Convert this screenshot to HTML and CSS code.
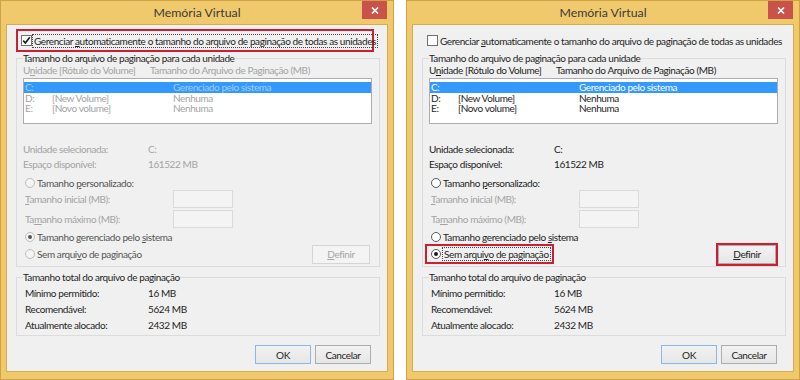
FILE: index.html
```html
<!DOCTYPE html>
<html lang="pt-BR">
<head>
    <meta charset="UTF-8">
    <meta name="viewport" content="width=device-width, initial-scale=1.0">
    <title>Memória Virtual</title>
    <link rel="stylesheet" href="styles.css">
</head>
<body>
<div class="screen">

    <!-- antes: gerenciamento automatico ligado -->
    <section class="dialog is-auto">
        <header class="titlebar">
            <span></span>
            <span class="title">Memória Virtual</span>
            <span class="close-btn">
                <svg width="8" height="7" viewBox="0 0 8 7"><path d="M1 0.5 L7 6.5 M7 0.5 L1 6.5" stroke="#fff" stroke-width="1.6"/></svg>
            </span>
        </header>
        <div class="client">
            <div class="auto-row mark">
                <span class="checkbox checked">
                    <svg width="9" height="9" viewBox="0 0 9 9"><path d="M1.2 4.6 L3.4 7 L7.8 1.2" fill="none" stroke="#1a1a1a" stroke-width="1.6"/></svg>
                </span>
                <span class="focus">Gerenciar <u>a</u>utomaticamente o tamanho do arquivo de paginação de todas as unidades</span>
            </div>

            <fieldset class="group group-drives">
                <legend>Tamanho do arquivo de paginação para cada unidade</legend>
                <div class="cols dim">
                    <span>U<u>n</u>idade [Rótulo do Volume]</span>
                    <span>Tamanho do Arquivo de Paginação (MB)</span>
                </div>
                <div class="listbox dim">
                    <div class="list-row selected"><span>C:</span><span></span><span>Gerenciado pelo sistema</span></div>
                    <div class="list-row"><span>D:</span><span>[New Volume]</span><span>Nenhuma</span></div>
                    <div class="list-row"><span>E:</span><span>[Novo volume]</span><span>Nenhuma</span></div>
                </div>
                <div class="info dim">
                    <span>Unidade selecionada:</span><span>C:</span>
                    <span>Espaço disponível:</span><span>161522 MB</span>
                </div>
                <div class="radio-row custom half">
                    <span class="radio off"></span><span>Tamanho <u>p</u>ersonalizado:</span>
                </div>
                <div class="size-row dim">
                    <span><u>T</u>amanho inicial (MB):</span><span class="textbox"></span>
                </div>
                <div class="size-row second dim">
                    <span>Ta<u>m</u>anho máximo (MB):</span><span class="textbox"></span>
                </div>
                <div class="radio-row system half">
                    <span class="radio off on"></span><span>Tamanho gerenciado pelo <u>s</u>istema</span>
                </div>
                <div class="none-row">
                    <div class="radio-row none-opt half">
                        <span class="radio off"></span><span>Sem arqui<u>v</u>o de paginação</span>
                    </div>
                    <span class="btn-wrap"><span class="btn disabled"><u>D</u>efinir</span></span>
                </div>
            </fieldset>

            <fieldset class="group group-total">
                <legend>Tamanho total do arquivo de paginação</legend>
                <div class="totals">
                    <span>Mínimo permitido:</span><span>16 MB</span>
                    <span>Recomendável:</span><span>5624 MB</span>
                    <span>Atualmente alocado:</span><span>2432 MB</span>
                </div>
            </fieldset>

            <div class="actions">
                <span class="btn default">OK</span>
                <span class="btn">Cancelar</span>
            </div>
        </div>
    </section>

    <!-- depois: sem arquivo de paginacao -->
    <section class="dialog">
        <header class="titlebar">
            <span></span>
            <span class="title">Memória Virtual</span>
            <span class="close-btn">
                <svg width="8" height="7" viewBox="0 0 8 7"><path d="M1 0.5 L7 6.5 M7 0.5 L1 6.5" stroke="#fff" stroke-width="1.6"/></svg>
            </span>
        </header>
        <div class="client">
            <div class="auto-row">
                <span class="checkbox"></span>
                <span class="plain">Gerenciar <u>a</u>utomaticamente o tamanho do arquivo de paginação de todas as unidades</span>
            </div>

            <fieldset class="group group-drives">
                <legend>Tamanho do arquivo de paginação para cada unidade</legend>
                <div class="cols">
                    <span>U<u>n</u>idade [Rótulo do Volume]</span>
                    <span>Tamanho do Arquivo de Paginação (MB)</span>
                </div>
                <div class="listbox">
                    <div class="list-row selected"><span>C:</span><span></span><span>Gerenciado pelo sistema</span></div>
                    <div class="list-row"><span>D:</span><span>[New Volume]</span><span>Nenhuma</span></div>
                    <div class="list-row"><span>E:</span><span>[Novo volume]</span><span>Nenhuma</span></div>
                </div>
                <div class="info">
                    <span>Unidade selecionada:</span><span>C:</span>
                    <span>Espaço disponível:</span><span>161522 MB</span>
                </div>
                <div class="radio-row custom">
                    <span class="radio"></span><span>Tamanho <u>p</u>ersonalizado:</span>
                </div>
                <div class="size-row dim">
                    <span><u>T</u>amanho inicial (MB):</span><span class="textbox"></span>
                </div>
                <div class="size-row second dim">
                    <span>Ta<u>m</u>anho máximo (MB):</span><span class="textbox"></span>
                </div>
                <div class="radio-row system">
                    <span class="radio"></span><span>Tamanho gerenciado pelo <u>s</u>istema</span>
                </div>
                <div class="none-row">
                    <div class="radio-row none-opt mark">
                        <span class="radio on"></span><span class="focus">Sem arqui<u>v</u>o de paginação</span>
                    </div>
                    <span class="btn-wrap mark"><span class="btn"><u>D</u>efinir</span></span>
                </div>
            </fieldset>

            <fieldset class="group group-total">
                <legend>Tamanho total do arquivo de paginação</legend>
                <div class="totals">
                    <span>Mínimo permitido:</span><span>16 MB</span>
                    <span>Recomendável:</span><span>5624 MB</span>
                    <span>Atualmente alocado:</span><span>2432 MB</span>
                </div>
            </fieldset>

            <div class="actions">
                <span class="btn default">OK</span>
                <span class="btn">Cancelar</span>
            </div>
        </div>
    </section>

</div>
</body>
</html>
```
FILE: styles.css
```css
body {
    margin: 0;
    background: #fff;
    font-family: Lato, "Liberation Sans", sans-serif;
    font-size: 10px;
    letter-spacing: -0.4px;
    color: #1e1e1e;
    white-space: nowrap;
}

.screen {
    display: flex;
    gap: 12px;
    width: 800px;
    height: 380px;
}

/* janela */
.dialog {
    box-sizing: border-box;
    width: 394px;
    height: 380px;
    display: flex;
    flex-direction: column;
    padding: 0 5px 7px 5px;
    background: #f1c96d;
    border: 1px solid #cfa343;
}

.titlebar {
    height: 23px;
    display: grid;
    grid-template-columns: 1fr auto 1fr;
    align-items: start;
}
.title {
    padding-top: 4px;
    font-size: 12.3px;
    letter-spacing: 0;
    color: #3a3a3a;
}
.close-btn {
    justify-self: end;
    width: 25px;
    height: 18px;
    margin-right: 1px;
    display: flex;
    align-items: center;
    justify-content: center;
    background: #c9524b;
}

.client {
    flex: 1;
    display: flex;
    flex-direction: column;
    padding: 0 7px 0 9px;
    background: #f0f0f0;
    border: 1px solid #d6ac52;
}

/* marcacoes vermelhas */
.mark {
    border-color: #cc1f33 !important;
}
.focus {
    outline: 1px dotted #444;
    outline-offset: 0;
    padding: 0 1px;
}
.plain {
    padding: 0 1px;
}

.auto-row {
    box-sizing: border-box;
    width: 358px;
    height: 23px;
    margin-top: 4px;
    display: flex;
    align-items: center;
    gap: 1px;
    padding-left: 3px;
    border: 2px solid transparent;
}
.checkbox {
    box-sizing: border-box;
    flex: none;
    width: 11px;
    height: 11px;
    display: flex;
    align-items: center;
    justify-content: center;
    background: #fff;
    border: 1px solid #707070;
}

/* group box */
.group {
    margin: 0;
    padding: 0 7px 2px 6px;
    border: 1px solid #dcdcdc;
    min-width: 0;
}
.group legend {
    padding: 0;
    line-height: 12px;
}
.dim {
    color: #a3a3a3;
}

.cols {
    display: grid;
    grid-template-columns: 127px 1fr;
    line-height: 12px;
}

.listbox {
    box-sizing: border-box;
    height: 46px;
    margin-top: 2px;
    padding-top: 3px;
    background: #fff;
    border: 1px solid #abadb3;
}
.list-row {
    display: grid;
    grid-template-columns: 27px 121px 1fr;
    height: 10.5px;
    line-height: 10.5px;
    padding: 0 1px;
}
.list-row.selected {
    background: #3399ff;
    color: #fff;
}
.dim .list-row.selected {
    color: #a6cdf5;
}

.info {
    display: grid;
    grid-template-columns: 125px 1fr;
    grid-auto-rows: 15px;
    align-items: center;
    margin-top: 17px;
}

.radio-row {
    display: flex;
    align-items: center;
    gap: 2px;
    margin-left: 2px;
}
.radio-row.custom {
    height: 15px;
    margin-top: 4px;
}
.radio-row.system {
    height: 14px;
    margin-top: 2px;
}
.half {
    color: #555;
}
.radio {
    box-sizing: border-box;
    flex: none;
    width: 10px;
    height: 10px;
    border-radius: 50%;
    border: 1px solid #5a5a5a;
    background: #fff;
    display: flex;
    align-items: center;
    justify-content: center;
}
.radio.off {
    border-color: #bdbdbd;
    background: #f4f4f4;
}
.radio.on::after {
    content: "";
    width: 4px;
    height: 4px;
    border-radius: 50%;
    background: #1a1a1a;
}
.radio.off.on::after {
    background: #555;
}

.size-row {
    display: grid;
    grid-template-columns: 148px 60px;
    align-items: center;
    height: 18px;
    padding-left: 2px;
}
.size-row.second {
    margin-top: 2px;
}
.textbox {
    box-sizing: border-box;
    height: 18px;
    border: 1px solid #dadada;
    background: #f4f4f4;
}

.none-row {
    height: 20px;
    display: flex;
    align-items: center;
    justify-content: space-between;
}
.radio-row.none-opt {
    box-sizing: border-box;
    height: 20px;
    margin-left: -4px;
    padding: 0 2px 0 4px;
    border: 2px solid transparent;
}
.btn-wrap {
    display: flex;
    margin: -2px 0;
    border: 2px solid transparent;
}

.btn {
    box-sizing: border-box;
    width: 58px;
    height: 19px;
    display: flex;
    align-items: center;
    justify-content: center;
    background: linear-gradient(#f2f2f2, #e6e6e6);
    border: 1px solid #adadad;
    color: #1e1e1e;
}
.btn.disabled {
    background: #f4f4f4;
    border-color: #d5d5d5;
    color: #a6a6a6;
}
.btn.default {
    border-color: #8ab8e6;
}

.group-total {
    margin-top: 4px;
    padding-top: 2px;
}
.totals {
    display: grid;
    grid-template-columns: 123px 1fr;
    grid-auto-rows: 16px;
    align-items: center;
    margin-left: 2px;
}

.actions {
    display: flex;
    justify-content: flex-end;
    gap: 4px;
    margin: 9px 9px 0 0;
}
.actions .btn {
    width: 56px;
}
```
